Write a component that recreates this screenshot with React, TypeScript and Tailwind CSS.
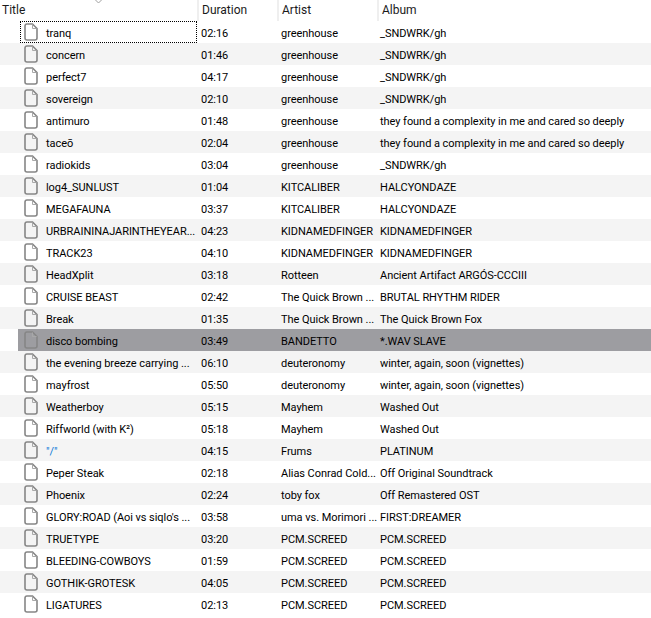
const rows: [string, string, string, string][] = [
  ["tranq", "02:16", "greenhouse", "_SNDWRK/gh"],
  ["concern", "01:46", "greenhouse", "_SNDWRK/gh"],
  ["perfect7", "04:17", "greenhouse", "_SNDWRK/gh"],
  ["sovereign", "02:10", "greenhouse", "_SNDWRK/gh"],
  ["antimuro", "01:48", "greenhouse", "they found a complexity in me and cared so deeply"],
  ["taceō", "02:04", "greenhouse", "they found a complexity in me and cared so deeply"],
  ["radiokids", "03:04", "greenhouse", "_SNDWRK/gh"],
  ["log4_SUNLUST", "01:04", "KITCALIBER", "HALCYONDAZE"],
  ["MEGAFAUNA", "03:37", "KITCALIBER", "HALCYONDAZE"],
  ["URBRAININAJARINTHEYEAR...", "04:23", "KIDNAMEDFINGER", "KIDNAMEDFINGER"],
  ["TRACK23", "04:10", "KIDNAMEDFINGER", "KIDNAMEDFINGER"],
  ["HeadXplit", "03:18", "Rotteen", "Ancient Artifact ARGÓS-CCCIII"],
  ["CRUISE BEAST", "02:42", "The Quick Brown ...", "BRUTAL RHYTHM RIDER"],
  ["Break", "01:35", "The Quick Brown ...", "The Quick Brown Fox"],
  ["disco bombing", "03:49", "BANDETTO", "*.WAV SLAVE"],
  ["the evening breeze carrying ...", "06:10", "deuteronomy", "winter, again, soon (vignettes)"],
  ["mayfrost", "05:50", "deuteronomy", "winter, again, soon (vignettes)"],
  ["Weatherboy", "05:15", "Mayhem", "Washed Out"],
  ["Riffworld (with K²)", "05:18", "Mayhem", "Washed Out"],
  ['"/"', "04:15", "Frums", "PLATINUM"],
  ["Peper Steak", "02:18", "Alias Conrad Cold...", "Off Original Soundtrack"],
  ["Phoenix", "02:24", "toby fox", "Off Remastered OST"],
  ["GLORY:ROAD (Aoi vs siqlo's ...", "03:58", "uma vs. Morimori ...", "FIRST:DREAMER"],
  ["TRUETYPE", "03:20", "PCM.SCREED", "PCM.SCREED"],
  ["BLEEDING-COWBOYS", "01:59", "PCM.SCREED", "PCM.SCREED"],
  ["GOTHIK-GROTESK", "04:05", "PCM.SCREED", "PCM.SCREED"],
  ["LIGATURES", "02:13", "PCM.SCREED", "PCM.SCREED"],
];

function FileIcon() {
  return (
    <svg width="14" height="18" viewBox="0 0 14 18" fill="none" className="shrink-0">
      <path
        d="M1 3C1 1.6 1.6 1 3 1H8.5L13 5.5V15C13 16.4 12.4 17 11 17H3C1.6 17 1 16.4 1 15Z"
        stroke="#868686"
        strokeWidth="1.6"
      />
      <path d="M8.5 1.5V5.5H12.5" stroke="#a8a8a8" strokeWidth="1" />
    </svg>
  );
}

export default function App() {
  return (
    <div className="w-[651px] h-[618px] overflow-hidden bg-white text-[11px] tracking-[-0.05px] leading-[22px] text-black font-['Roboto',sans-serif]">
      <div className="relative flex h-[21px] text-[12px] tracking-normal text-[#1a1a1a]">
        <div className="w-[197px] shrink-0 pl-[2px] leading-[20px]">Title</div>
        <div className="w-[80px] shrink-0 pl-[3px] leading-[20px] border-l-2 border-[#efefef]">Duration</div>
        <div className="w-[100px] shrink-0 pl-[3px] leading-[20px] border-l-2 border-[#efefef]">Artist</div>
        <div className="flex-1 pl-[3px] leading-[20px] border-l-2 border-[#efefef]">Album</div>
        <svg width="7" height="4" viewBox="0 0 7 4" className="absolute left-[95px] top-0">
          <path d="M0.5 0L3.5 3L6.5 0" fill="none" stroke="#a0a0a0" />
        </svg>
      </div>
      {rows.map((r, i) => {
        const even = i % 2 === 1;
        const selected = i === 14;
        const focused = i === 0;
        return (
          <div key={i} className={`flex h-[22px] ${even ? "bg-[#f4f4f4]" : "bg-white"}`}>
            <div className={`flex flex-1 min-w-0 h-[22px] ml-[18px] ${selected ? "bg-[#9d9da1]" : ""}`}>
              <div className="w-[179px] shrink-0 pl-[2px]">
                <div
                  className={`flex items-center h-[22px] w-[177px] pl-[3px] border border-dotted ${
                    focused ? "border-black" : "border-transparent"
                  }`}
                >
                  <FileIcon />
                  <span className={`ml-[8px] mt-[4px] whitespace-nowrap ${i === 19 ? "text-[#0a78d7]" : ""}`}>{r[0]}</span>
                </div>
              </div>
              <div className="w-[80px] h-[22px] shrink-0 pl-[4px] pt-[2px] whitespace-nowrap">{r[1]}</div>
              <div className="w-[100px] h-[22px] shrink-0 pl-[4px] pt-[2px] whitespace-nowrap">{r[2]}</div>
              <div className="flex-1 h-[22px] pl-[3px] pt-[2px] whitespace-nowrap">{r[3]}</div>
            </div>
          </div>
        );
      })}
    </div>
  );
}
